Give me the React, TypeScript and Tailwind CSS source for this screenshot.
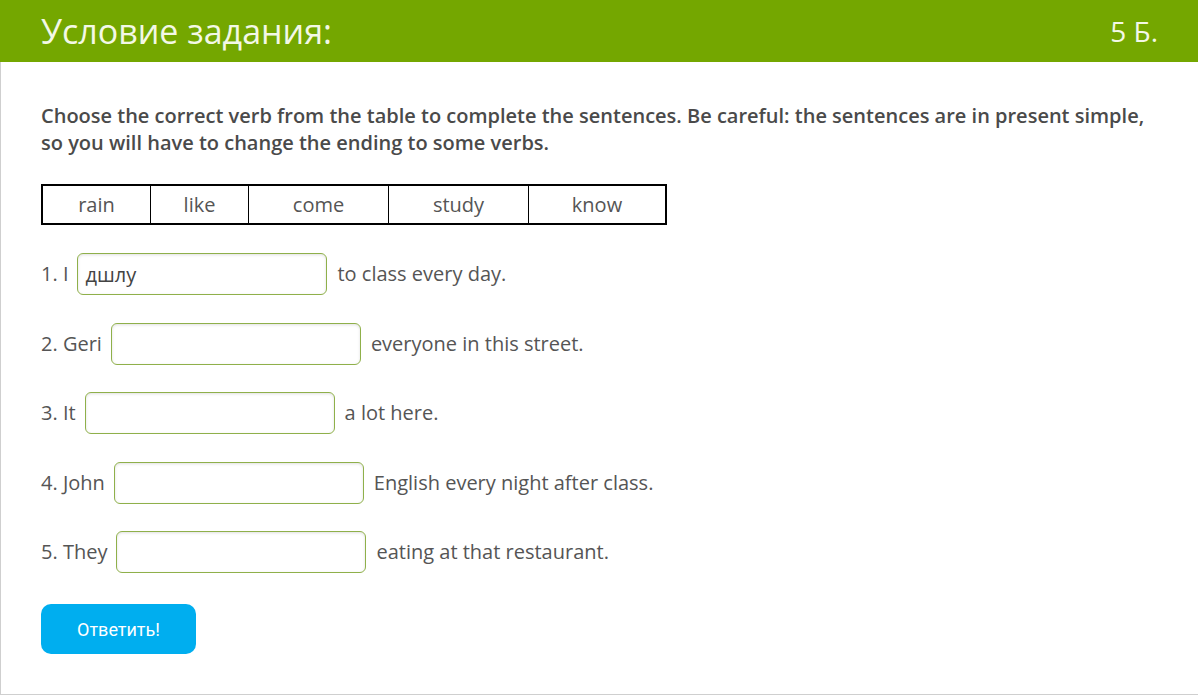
import { useState } from "react";

const verbs = [
  { word: "rain", w: "w-[107px]" },
  { word: "like", w: "w-[98px]" },
  { word: "come", w: "w-[140px]" },
  { word: "study", w: "w-[140px]" },
  { word: "know", w: "w-[137px]" },
];

const rows = [
  { before: "1. I", after: "to class every day.", value: "дшлу" },
  { before: "2. Geri", after: "everyone in this street.", value: "" },
  { before: "3. It", after: "a lot here.", value: "" },
  { before: "4. John", after: "English every night after class.", value: "" },
  { before: "5. They", after: "eating at that restaurant.", value: "" },
];

function GapRow({ before, after, value }: { before: string; after: string; value: string }) {
  const [text, setText] = useState(value);
  return (
    <div className="flex items-center h-[42px]">
      <span className="mr-[9px]">{before}</span>
      <input
        value={text}
        onChange={(e) => setText(e.target.value)}
        className="w-[250px] h-[42px] rounded-[6px] border border-[#8fb04a] bg-white px-[7px] text-[20px] text-[#444] shadow-[inset_0_1px_3px_rgba(0,0,0,0.12)] outline-none"
      />
      <span className="ml-[10px]">{after}</span>
    </div>
  );
}

export default function App() {
  return (
    <div className="w-[1198px] h-[696px] bg-white font-['Open_Sans',sans-serif] text-[#555]">
      <div className="flex items-center justify-between h-[62px] bg-[#74a700] pl-[41px] pr-[40px] text-[#f3f8e6]">
        <h1 className="text-[34px] leading-none font-normal">Условие задания:</h1>
        <span className="text-[28px] leading-none">5 Б.</span>
      </div>
      <div className="h-[633px] border-l border-b border-[#cfcfcf] pl-[40px] pt-[40px]">
        <p className="text-[20px] leading-[27px] font-semibold text-[#4a4a4a] w-[1112px]">
          Choose the correct verb from the table to complete the sentences. Be careful: the sentences are in present simple, so you will have to change the ending to some verbs.
        </p>
        <div className="mt-[28px] flex w-fit border-2 border-black">
          {verbs.map((v, i) => (
            <div
              key={v.word}
              className={`${v.w} h-[37px] flex items-center justify-center text-[20px] ${i > 0 ? "border-l border-black" : ""}`}
            >
              {v.word}
            </div>
          ))}
        </div>
        <div className="mt-[28px] flex flex-col gap-[27.5px] text-[20px]">
          {rows.map((r) => (
            <GapRow key={r.before} {...r} />
          ))}
        </div>
        <button className="mt-[31px] w-[155px] h-[50px] rounded-[10px] bg-[#00aeef] text-white text-[18px] font-['Roboto',sans-serif]">
          Ответить!
        </button>
      </div>
    </div>
  );
}
